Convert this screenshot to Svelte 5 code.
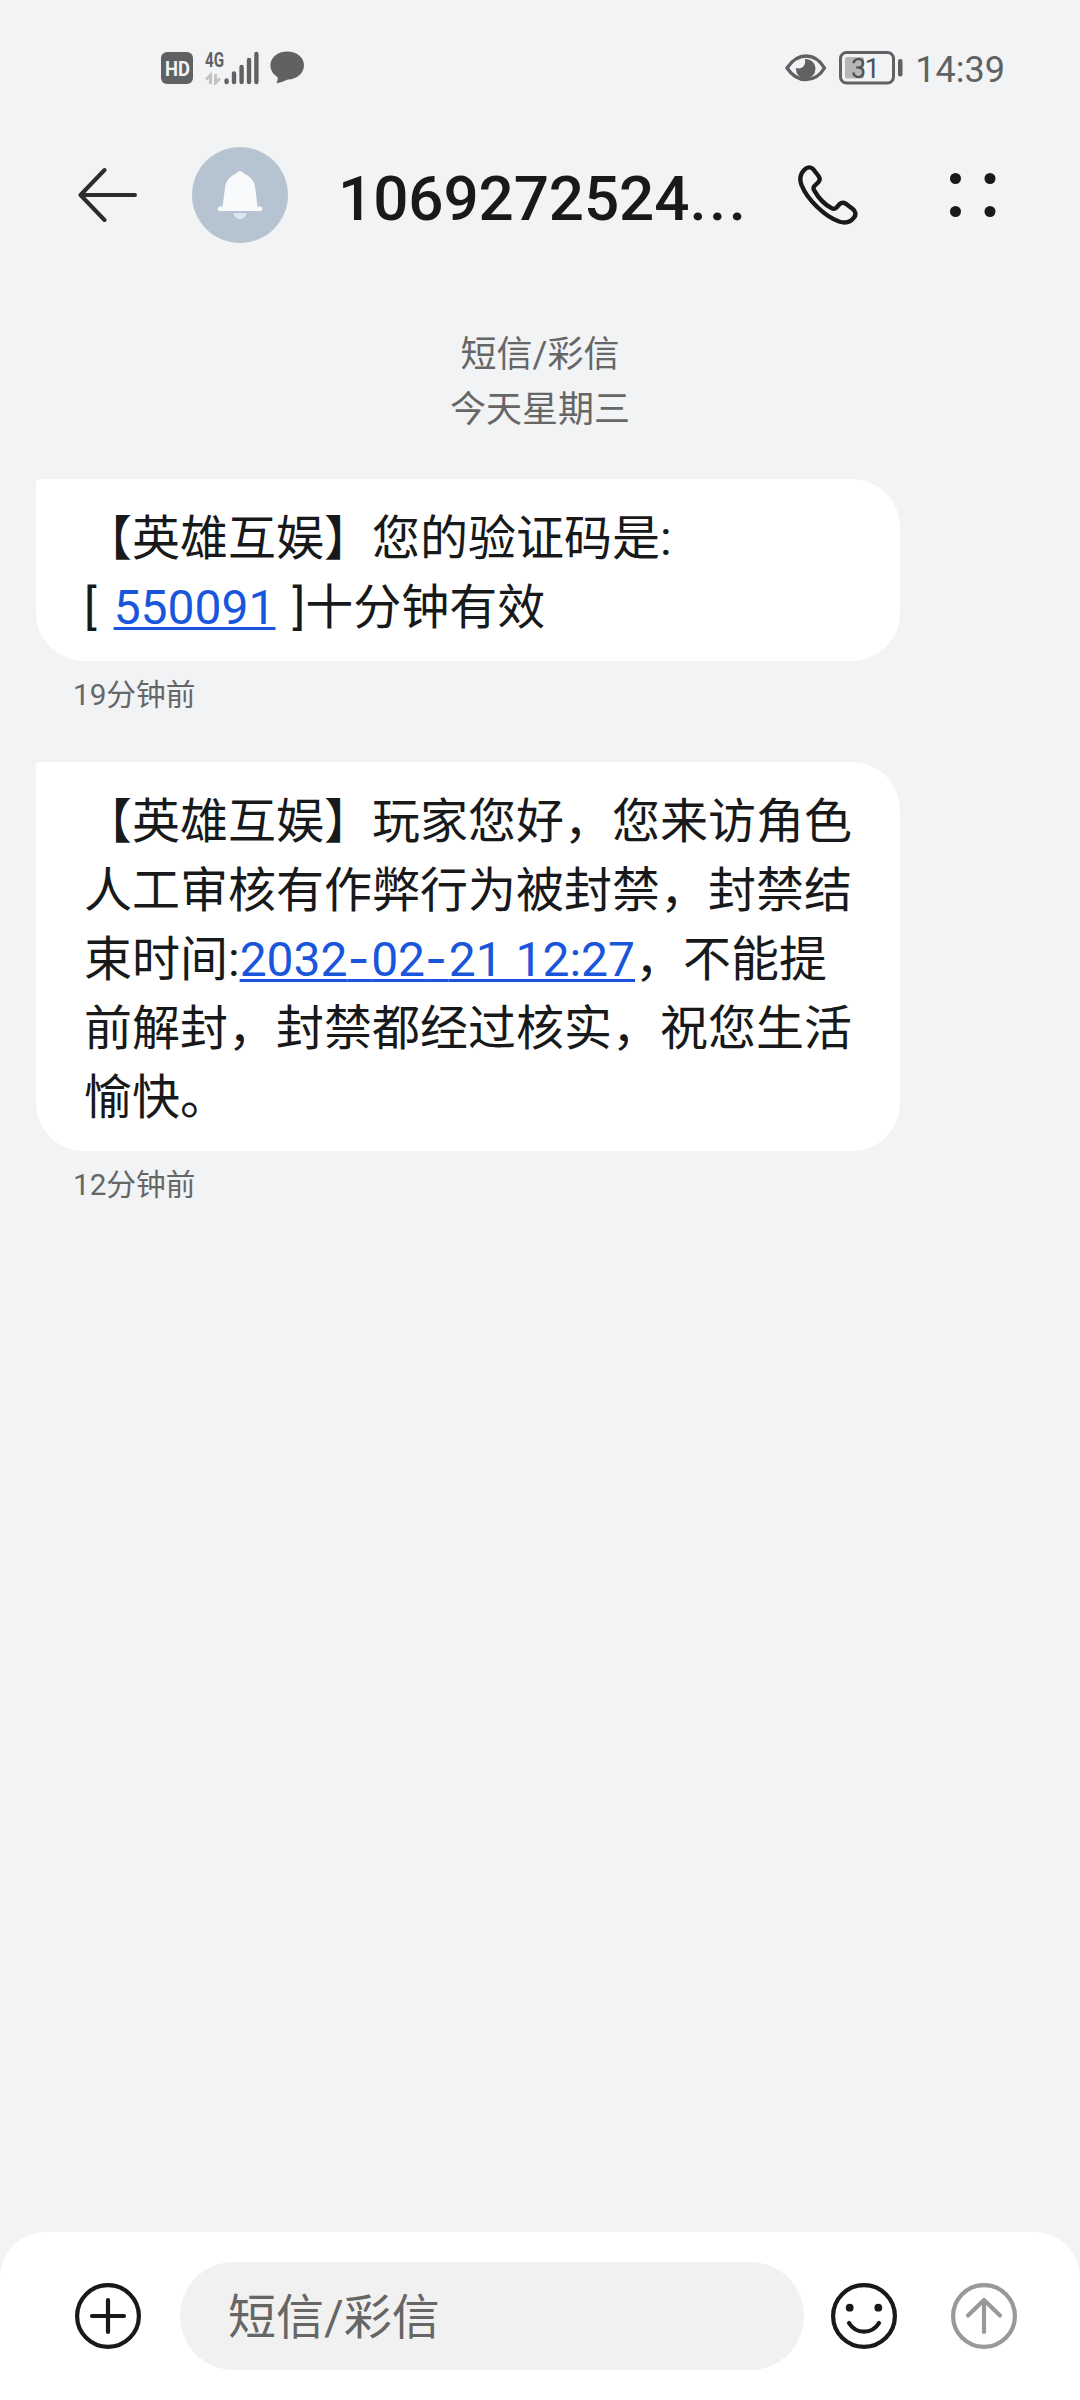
<script>
  const title = '1069272524';

  const messages = [
    {
      parts: [
        { text: '【英雄互娱】您的验证码是:\n' },
        { text: '[ ', loose: true },
        { text: '550091', link: true },
        { text: ' ]', loose: true },
        { text: '十分钟有效' }
      ],
      time: '19分钟前'
    },
    {
      parts: [
        { text: '【英雄互娱】玩家您好，您来访角色人工审核有作弊行为被封禁，封禁结束时间:' },
        { text: '2032-02-21 12:27', link: true },
        { text: '，不能提前解封，封禁都经过核实，祝您生活愉快。' }
      ],
      time: '12分钟前'
    }
  ];

  let draft = $state('');
</script>

<div class="screen">
  <div class="status">
    <div class="status-left">
      <svg class="hd" width="32" height="32" viewBox="0 0 32 32">
        <rect width="32" height="32" rx="6" fill="#606163" />
        <text x="4" y="23.5" font-size="20.5" font-weight="700" fill="#f1f3f5" textLength="25" lengthAdjust="spacingAndGlyphs">HD</text>
      </svg>
      <svg class="signal" width="54" height="42" viewBox="0 -8 54 42">
        <text x="0" y="15.5" font-size="20" font-weight="700" fill="#606163" textLength="19" lengthAdjust="spacingAndGlyphs">4G</text>
        <g fill="none" stroke="#c3c4c6" stroke-width="3">
          <path d="M5.5 33V24L1 28.5" />
          <path d="M10.5 23V32L15 27.5" />
        </g>
        <g stroke="#606163" stroke-width="4.4" stroke-linecap="round">
          <path d="M21.6 29.5V31M29 22.5V31M36.6 16V31M44 9V31M51.4 3V31" />
        </g>
      </svg>
      <svg width="35" height="33" viewBox="0 0 35 33">
        <path d="M17.3 .5C26.8 .5 34 6.5 34 14.2C34 22 27 28.3 18 28.4C15 29.5 10 32 6.3 32.2C7.5 30.2 8 28 7.6 26C3 23.5 .4 19 .4 14.3C.4 6.6 7.8 .5 17.3 .5Z" fill="#606163" />
      </svg>
    </div>
    <div class="status-right">
      <svg class="eye" width="42" height="28" viewBox="0 0 42 28">
        <circle cx="20.7" cy="14.8" r="9.8" fill="#606163" />
        <circle cx="13.8" cy="8" r="6.4" fill="#f1f3f5" />
        <path d="M2 14C7 6.5 13.5 2 21 2S35 6.5 39.5 14C35 21.5 28.5 25.6 21 25.6S7 21.5 2 14Z" fill="none" stroke="#606163" stroke-width="3.4" stroke-linejoin="round" />
      </svg>
      <svg class="battery" width="64" height="34" viewBox="0 0 64 34">
        <rect x="1.5" y="1.5" width="53" height="30.5" rx="6" fill="none" stroke="#606163" stroke-width="3" />
        <rect x="6" y="6" width="19" height="21.5" rx="2" fill="#b6b7b9" />
        <text x="12" y="26.5" font-size="27" fill="#505153" textLength="29">31</text>
        <rect x="59" y="8" width="4.5" height="17.5" rx="2" fill="#606163" />
      </svg>
      <span class="clock">14:39</span>
    </div>
  </div>

  <header>
    <button aria-label="返回">
      <svg width="60" height="56" viewBox="0 0 60 56" fill="none" stroke="#2b2c2d" stroke-width="4" stroke-linecap="round" stroke-linejoin="round">
        <path d="M26.5 3L2.5 28L26.5 53M3 28H57" />
      </svg>
    </button>
    <div class="avatar">
      <svg width="46" height="50" viewBox="0 0 46 50">
        <path d="M23 1Q25 1 27 3.5C34 7 37.5 11 38.3 18L40.5 36.5H43.5Q45.5 36.7 45.5 39T43.5 41H2.5Q.5 41 .5 39T2.5 36.5H5.5L8 18C9 11 12 7 19 3.5Q21 1 23 1Z" fill="#f8fafb" />
        <path d="M16.5 43H29.5C28.5 47 26 49 23 49S17.5 47 16.5 43Z" fill="#dfe7ee" />
      </svg>
    </div>
    <h1>{title}<span class="ellipsis">...</span></h1>
    <button class="call" aria-label="拨打电话">
      <svg width="60" height="60" viewBox="0 0 60 60" fill="none" stroke="#18191a" stroke-width="4.4" stroke-linejoin="round">
        <path d="M6.2 5C9 1.6 13 1.5 15.5 4.5L20.5 11C22 13 22.2 15 20.5 17L16.2 21.2C15.2 22.6 15.3 24 16.5 25.8C20 32 27 39.5 33.5 43.2C35.5 44.3 37 44 38.5 42.5L41.5 39.2C43.5 37.3 45.5 37.2 47.8 38.7L54.5 43.8C57.5 46 58.5 49.5 56 52.5C52.5 57.3 47 58.5 41 56.5C27 51.5 9.5 35 3.5 20C1.5 14.5 2 9.2 6.2 5Z" />
      </svg>
    </button>
    <button aria-label="更多">
      <svg width="46" height="44" viewBox="0 0 46 44" fill="#18191a">
        <circle cx="5.5" cy="5.5" r="5.5" />
        <circle cx="40" cy="5.5" r="5.5" />
        <circle cx="5.5" cy="38.5" r="5.5" />
        <circle cx="40" cy="38.5" r="5.5" />
      </svg>
    </button>
  </header>

  <main>
    <div class="day">
      <div>短信/彩信</div>
      <div>今天星期三</div>
    </div>

    {#each messages as message}
      <article>
        <p class="bubble">{#each message.parts as part}<span class:link={part.link} class:loose={part.loose}>{#each part.text.split(/(-)/) as run}{#if run === '-'}<span class="dash">-</span>{:else}{run}{/if}{/each}</span>{/each}</p>
        <div class="time">{message.time}</div>
      </article>
    {/each}
  </main>

  <footer>
    <button aria-label="添加">
      <svg width="66" height="66" viewBox="0 0 66 66" fill="none" stroke="#18191a" stroke-width="4.2" stroke-linecap="round">
        <circle cx="33" cy="33" r="30.9" />
        <path d="M33 17V49M17 33H49" />
      </svg>
    </button>
    <input bind:value={draft} placeholder="短信/彩信" />
    <button class="emoji" aria-label="表情">
      <svg width="66" height="66" viewBox="0 0 66 66" fill="none" stroke="#18191a" stroke-width="4.2" stroke-linecap="round">
        <circle cx="33" cy="33" r="30.9" />
        <circle cx="18.7" cy="24.7" r="3.9" fill="#18191a" stroke="none" />
        <circle cx="47.3" cy="24.7" r="3.9" fill="#18191a" stroke="none" />
        <path d="M18 40C25 51.5 41 51.5 48 40" />
      </svg>
    </button>
    <button aria-label="发送">
      <svg width="66" height="66" viewBox="0 0 66 66" fill="none" stroke="#999" stroke-width="4.2" stroke-linecap="round" stroke-linejoin="round">
        <circle cx="33" cy="33" r="30.9" />
        <path d="M33 49V17M17 32.5L33 17L49 32.5" />
      </svg>
    </button>
  </footer>
</div>

<style>
  :global(body) {
    background: #f1f3f5;
  }

  .screen {
    display: flex;
    flex-direction: column;
    width: 1080px;
    height: 2400px;
    background: #f1f3f5;
    color: #18191a;
    font-family: Roboto, 'Noto Sans CJK SC', sans-serif;
    overflow: hidden;
  }

  svg {
    display: block;
  }

  button {
    display: block;
    padding: 0;
    border: none;
    background: none;
  }

  .status {
    display: flex;
    justify-content: space-between;
    height: 125px;
    padding: 51px 75px 0 161px;
    box-sizing: border-box;
    color: #606163;
  }

  .status-left,
  .status-right {
    display: flex;
    align-items: flex-start;
  }

  .hd {
    margin: 1px 12px 0 0;
  }

  .signal {
    margin: -8px 11px 0 0;
  }

  .eye {
    margin-top: 3px;
  }

  .battery {
    margin: 0 12px;
  }

  .clock {
    height: 36px;
    font-size: 36px;
    line-height: 39px;
  }

  header {
    display: flex;
    align-items: center;
    flex-shrink: 0;
    height: 140px;
    padding: 0 84px 0 78px;
  }

  .avatar {
    display: flex;
    align-items: center;
    justify-content: center;
    width: 96px;
    height: 96px;
    margin-left: 54px;
    border-radius: 50%;
    background: #b6c4d1;
  }

  h1 {
    flex: 1;
    margin: 0 0 0 50px;
    padding-top: 7px;
    font-size: 62px;
    font-weight: 500;
    line-height: 72px;
    letter-spacing: -0.1px;
    white-space: nowrap;
  }

  .ellipsis {
    letter-spacing: 2.5px;
  }

  .call {
    margin-right: 92px;
  }

  main {
    flex: 1;
  }

  .day {
    height: 151px;
    padding-top: 63px;
    color: #666;
    font-size: 36px;
    line-height: 55px;
    text-align: center;
  }

  article {
    margin-bottom: 33px;
    padding-left: 36px;
  }

  .bubble {
    width: 768px;
    margin: 0;
    padding: 25px 48px 19px;
    border-radius: 4px 48px 48px 48px;
    background: #fff;
    font-size: 48px;
    line-height: 69px;
    white-space: pre-line;
  }

  .loose {
    word-spacing: 5px;
  }

  .link {
    color: #1a56db;
    word-spacing: 1px;
    text-decoration: underline;
    text-decoration-thickness: 3px;
    text-underline-offset: 3px;
    text-decoration-skip-ink: none;
  }

  /* Roboto's hyphen is too short between digits */
  .dash {
    font-family: Inter, sans-serif;
    letter-spacing: 1.5px;
    line-height: 1;
  }

  .time {
    height: 68px;
    padding-left: 37px;
    color: #666;
    font-size: 29.7px;
    line-height: 68px;
  }

  footer {
    display: flex;
    align-items: center;
    height: 168px;
    padding: 0 63px 0 75px;
    box-sizing: border-box;
    border-radius: 46px 46px 0 0;
    background: #fff;
  }

  input {
    flex: 1;
    min-width: 0;
    height: 108px;
    margin: 0 27px 0 39px;
    padding: 3px 48px 0;
    box-sizing: border-box;
    border: none;
    border-radius: 54px;
    background: #f1f1f1;
    font: inherit;
    font-size: 48px;
  }

  input::placeholder {
    color: #666;
    opacity: 1;
  }

  .emoji {
    margin-right: 54px;
  }
</style>
